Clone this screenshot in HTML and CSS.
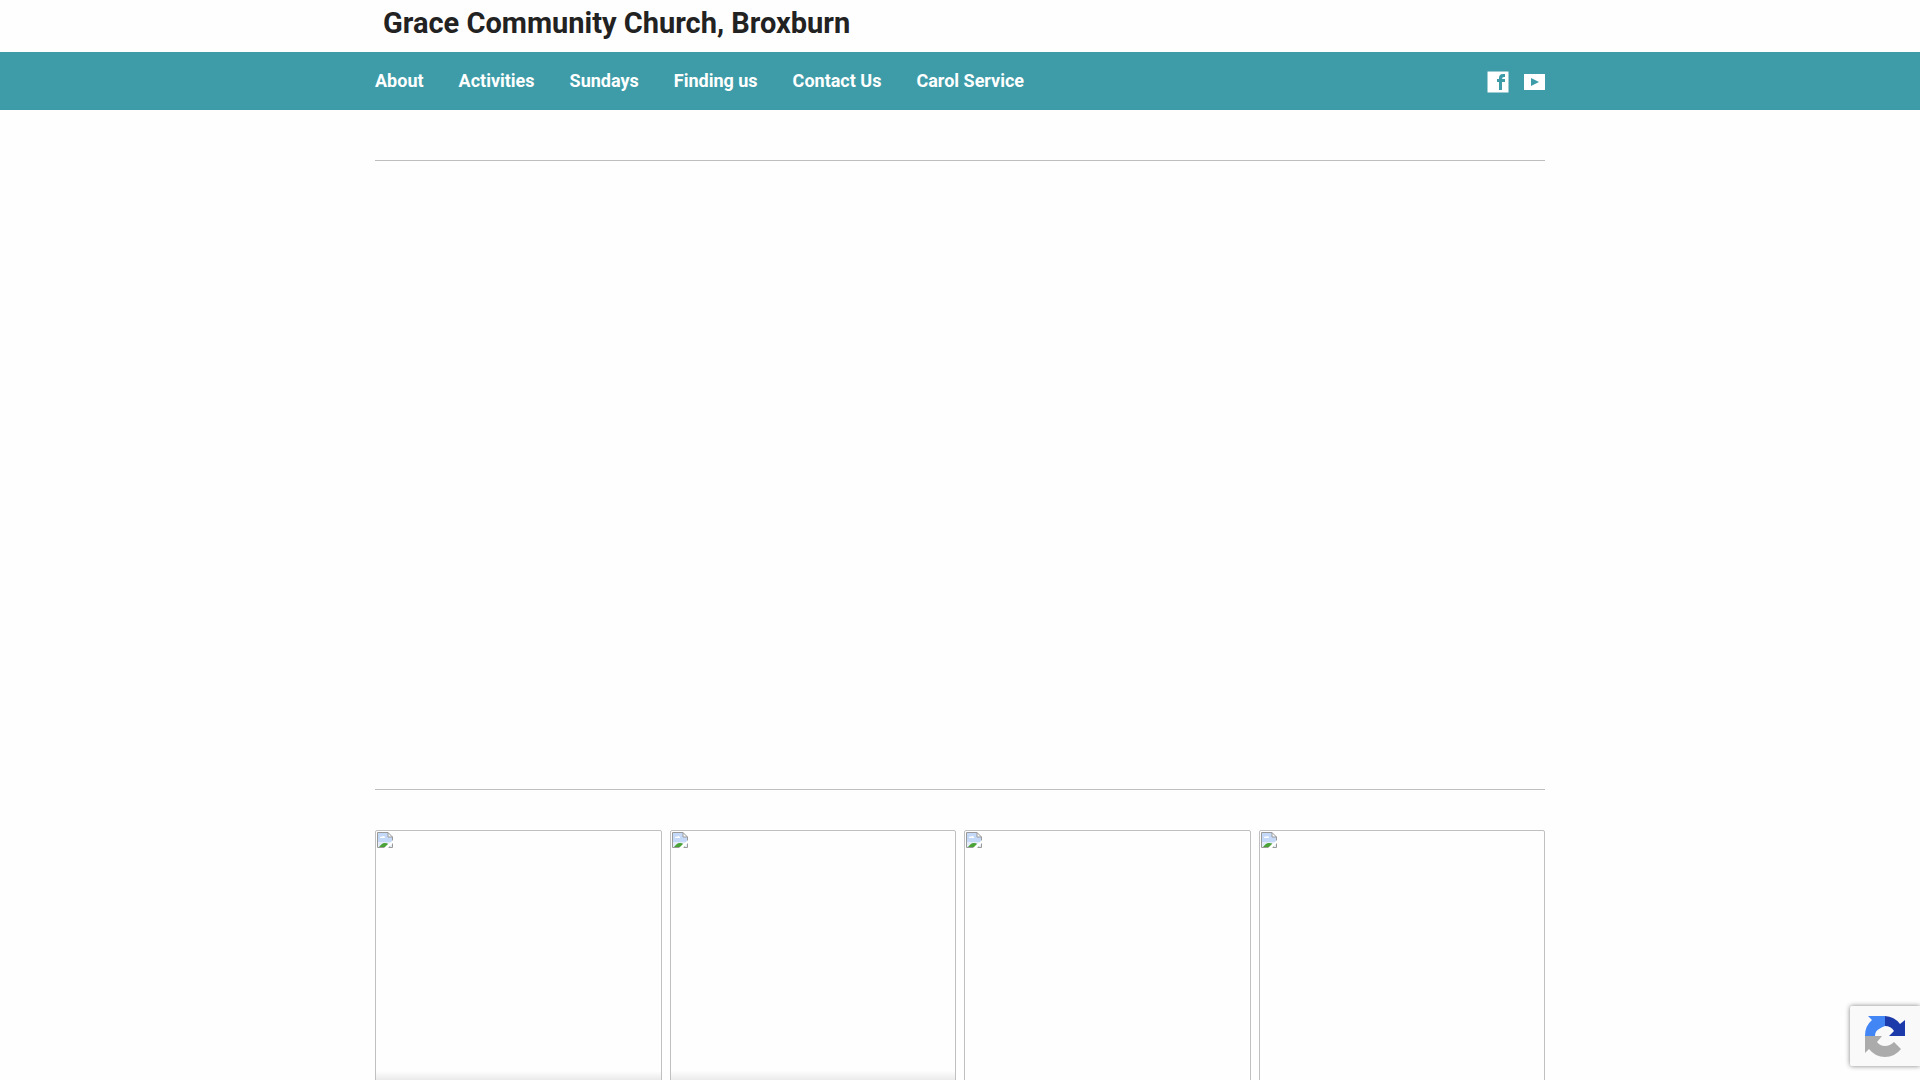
FILE: index.html
```html
<!DOCTYPE html>
<html lang="en">
  <head>
    <meta charset="UTF-8" />
    <meta name="viewport" content="width=device-width, initial-scale=1.0" />
    <title>Grace Community Church, Broxburn</title>
    <link rel="stylesheet" href="styles.css">
  </head>
  <body>
    <svg class="sprite" aria-hidden="true">
      <symbol id="photo" viewBox="0 0 16 16">
        <path d="M1 1h10l4 4v10H1z" fill="#c4d8f8" />
        <path d="M1 10h14v5H1z" fill="#e4ecfa" />
        <path d="M3 6c0-1 1-2 2-1 1-2 3-1 3 1H3z" fill="#fff" />
        <path d="M2 15c2-2 3-4 6-4s4 1 5 4z" fill="#4aa336" />
        <path d="M11 1v4h4z" fill="#fff" />
        <path d="M0.500 15.500V0.500H11L15.500 5v10.500H0.500zM11 0.500V5h4.500" fill="none" stroke="#9a9a9a" />
        <path d="M7 16l4-4 2-1 3-3v3l-5 5z" fill="#fff" />
      </symbol>
    </svg>

    <header>
      <div class="container">
        <h1 class="site-title">Grace Community Church, Broxburn</h1>
      </div>
      <div class="navbar">
        <div class="container navbar-inner">
          <nav class="menu">
            <a href="#">About</a>
            <a href="#">Activities</a>
            <a href="#">Sundays</a>
            <a href="#">Finding us</a>
            <a href="#">Contact Us</a>
            <a href="#">Carol Service</a>
          </nav>
          <div class="social">
            <a href="#" aria-label="Facebook">
              <svg width="22" height="22" viewBox="0 0 22 22">
                <path d="M0.500 0.500h21v21H0.500z" fill="#fff" />
                <path d="M12 19v-8h-2V8h2V7q0-4 4-4h2v3h-1q-2 0-2 2h3v3h-3v8z" fill="#3d9ca8" />
              </svg>
            </a>
            <a href="#" aria-label="YouTube">
              <svg width="21" height="22" viewBox="0 0 21 22">
                <path d="M0 3h21v16H0zM7 7v8l8-4z" fill="#fff" fill-rule="evenodd" />
              </svg>
            </a>
          </div>
        </div>
      </div>
    </header>

    <main class="container">
      <hr />
      <div class="slider"></div>
      <hr />
      <div class="tiles">
        <a class="tile shaded" href="#" aria-label="Photo 1"><svg class="photo"><use href="#photo" /></svg></a>
        <a class="tile shaded" href="#" aria-label="Photo 2"><svg class="photo"><use href="#photo" /></svg></a>
        <a class="tile" href="#" aria-label="Photo 3"><svg class="photo"><use href="#photo" /></svg></a>
        <a class="tile" href="#" aria-label="Photo 4"><svg class="photo"><use href="#photo" /></svg></a>
      </div>
    </main>

    <div class="badge">
      <svg width="42" height="42" viewBox="0 0 42 42">
        <path d="M21 1A20 20 0 0 1 36 9l5-4v16H25l5-5q-3-5-9-5z" fill="#1c3aa9" />
        <path d="M21 1H4l4 4A20 20 0 0 0 1 21h10q0-5 4-7 3-2 6-3z" fill="#4285f4" />
        <path d="M1 21v17l4-4A20 20 0 0 0 37 34l-7-7q-4 4-9 4-5 0-8-4l5-6z" fill="#ababab" />
      </svg>
    </div>
  </body>
</html>
```

FILE: styles.css
```css
* {
  box-sizing: border-box;
}
body {
  margin: 0;
  background-color: #fefefe;
  color: #222;
  font-family: Roboto, sans-serif;
  font-size: 18px;
  overflow: hidden;
}
.sprite {
  position: absolute;
  width: 0;
  height: 0;
}
.container {
  max-width: 1170px;
  margin: 0 auto;
}
.site-title {
  margin: 0;
  padding: 5px 8px 11px;
  font-size: 29px;
  line-height: 36px;
  font-weight: bold;
}

.navbar {
  background-color: #3d9ca8;
}
.navbar-inner {
  display: flex;
  justify-content: space-between;
  height: 58px;
  padding-top: 18px;
}
.menu {
  display: flex;
  gap: 35px;
}
.menu a {
  color: #fff;
  font-weight: bold;
  line-height: 22px;
  text-decoration: none;
}
.social {
  display: flex;
  gap: 15px;
  padding-top: 1px;
}
.social a,
.social svg {
  display: block;
}

hr {
  margin: 50px 0 40px;
  border: 0;
  border-top: 1px solid #bebebe;
}
.slider {
  height: 538px;
}
.tiles {
  display: grid;
  grid-template-columns: repeat(4, 1fr);
  gap: 8px;
}
.tile {
  height: 286px;
  padding: 1px;
  border: 1px solid #c0c0c0;
  border-radius: 2px;
}
.shaded {
  background: linear-gradient(transparent 240px, #e8e8e8 250px);
}
.photo {
  display: block;
  width: 16px;
  height: 16px;
}

.badge {
  position: fixed;
  right: 0;
  bottom: 14px;
  width: 70px;
  height: 60px;
  padding: 9px 14px;
  border-radius: 2px 0 0 2px;
  background-color: #f9f9f9;
  box-shadow: 0 0 5px gray;
}
```
